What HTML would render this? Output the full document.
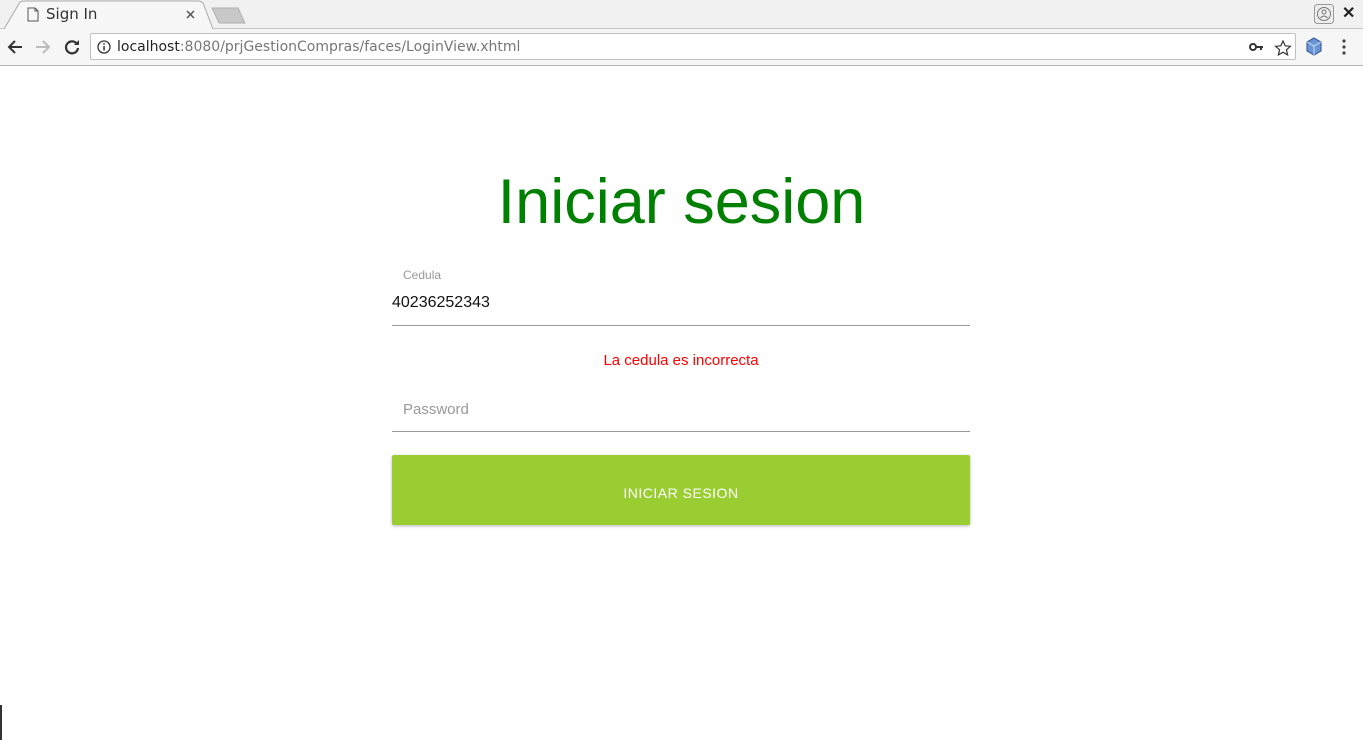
<!DOCTYPE html>
<html><head><style>
*{margin:0;padding:0;box-sizing:border-box}
body{width:1363px;height:740px;position:relative;overflow:hidden;background:#fff;font-family:"Liberation Sans",sans-serif}
.tabs{position:absolute;left:0;top:0;width:1363px;height:29px;background:#f1f1f1;border-bottom:1px solid #c6c6c6}
.tb{position:absolute;left:0;top:29px;width:1363px;height:37px;background:#f6f6f6;border-bottom:1px solid #b4b4b4}
.url{position:absolute;left:90px;top:4px;width:1206px;height:27px;background:#fff;border:1px solid #c0c0c0;border-radius:2px}
.abs{position:absolute}
</style></head><body>
<div class="tabs">
<svg class="abs" style="left:0;top:0" width="260" height="30">
<path d="M4 29 L20 2 Q22 1 25 1 L198 1 Q201 1 203 3 L213 29" fill="#f7f7f7" stroke="#a8a8a8" stroke-width="1"/>
<path d="M212 8 L238 8 L245 23 L219 23 Z" fill="#c8c8c8" stroke="#b0b0b0"/>
<path d="M28 8 h7 l3 3 v10 h-10 z M35 8 v3 h3" fill="none" stroke="#555" stroke-width="1"/>
<path d="M187 11 l7 7 M194 11 l-7 7" stroke="#555" stroke-width="1.5"/>
</svg>
<div class="abs" style="left:46px;top:5px;font-family:'DejaVu Sans',sans-serif;font-size:15px;color:#333">Sign In</div>
<svg class="abs" style="left:1314px;top:4px" width="21" height="21"><rect x="0.5" y="0.5" width="19" height="19" rx="3" fill="#eee" stroke="#999"/><circle cx="10" cy="10" r="6.5" fill="none" stroke="#777"/><circle cx="10" cy="8" r="2" fill="none" stroke="#777"/><path d="M6.5 14 q3.5-4 7 0" fill="none" stroke="#777"/></svg>
<div class="abs" style="left:1342px;top:3px;font-size:16px;font-weight:bold;color:#222">✕</div>
</div>
<div class="tb">
<svg class="abs" style="left:0;top:0" width="90" height="37">
<path d="M22 18 H9 M15 12 L9 18 L15 24" fill="none" stroke="#333" stroke-width="2"/>
<path d="M36 18 H49 M43 12 L49 18 L43 24" fill="none" stroke="#bbb" stroke-width="2"/>
<path d="M77 15 A6 6 0 1 0 78 19" fill="none" stroke="#333" stroke-width="2.2"/><path d="M79 11 V16 H74 Z" fill="#333"/>
</svg>
<div class="url">
<svg class="abs" style="left:6px;top:6px" width="14" height="14"><circle cx="7" cy="7" r="6" fill="none" stroke="#333" stroke-width="1.3"/><rect x="6.3" y="6" width="1.5" height="4.5" fill="#333"/><rect x="6.3" y="3.2" width="1.5" height="1.5" fill="#333"/></svg>
<div class="abs" style="left:26px;top:5px;font-family:'DejaVu Sans',sans-serif;font-size:14px;color:#222;white-space:nowrap">localhost<span style="color:#777">:8080/prjGestionCompras/faces/LoginView.xhtml</span></div>
<svg class="abs" style="left:1157px;top:6px" width="45" height="16"><circle cx="5" cy="7" r="3" fill="none" stroke="#333" stroke-width="2"/><path d="M8 7 H15 M13 7 V10" stroke="#333" stroke-width="2"/><path d="M35 1 l2.2 4.8 5.2.5 -4 3.5 1.2 5.1 -4.6-2.7 -4.6 2.7 1.2-5.1 -4-3.5 5.2-.5z" fill="none" stroke="#333" stroke-width="1.2"/></svg>
</div>
<svg class="abs" style="left:1305px;top:8px" width="18" height="20"><path d="M9 1 L16 5 V14 L9 18 L2 14 V5 Z" fill="#6a95d6" stroke="#2b4f8a"/><path d="M2 5 L9 9 L16 5 M9 9 V18" fill="none" stroke="#cfe0f8"/></svg>
<svg class="abs" style="left:1341px;top:9px" width="6" height="18"><circle cx="3" cy="3" r="1.6" fill="#444"/><circle cx="3" cy="9" r="1.6" fill="#444"/><circle cx="3" cy="15" r="1.6" fill="#444"/></svg>
</div>

<div class="abs" style="left:0;top:166px;width:1363px;text-align:center;font-size:63px;color:#008000;line-height:72px">Iniciar sesion</div>

<div class="abs" style="left:403px;top:268px;font-size:12px;color:#999">Cedula</div>
<div class="abs" style="left:392px;top:294px;font-size:16px;color:#111">40236252343</div>
<div class="abs" style="left:392px;top:325px;width:578px;height:1px;background:#999"></div>

<div class="abs" style="left:392px;top:352px;width:578px;text-align:center;font-size:15px;color:#f00">La cedula es incorrecta</div>

<div class="abs" style="left:403px;top:401px;font-size:15px;color:#999">Password</div>
<div class="abs" style="left:392px;top:431px;width:578px;height:1px;background:#999"></div>

<div class="abs" style="left:392px;top:455px;width:578px;height:70px;background:#9acd32;border-radius:2px;box-shadow:0 1px 3px rgba(0,0,0,.3);color:#fff;font-size:14px;text-align:center;line-height:76px;letter-spacing:.5px">INICIAR SESION</div>

<div class="abs" style="left:0;top:705px;width:2px;height:35px;background:#333"></div>
</body></html>
